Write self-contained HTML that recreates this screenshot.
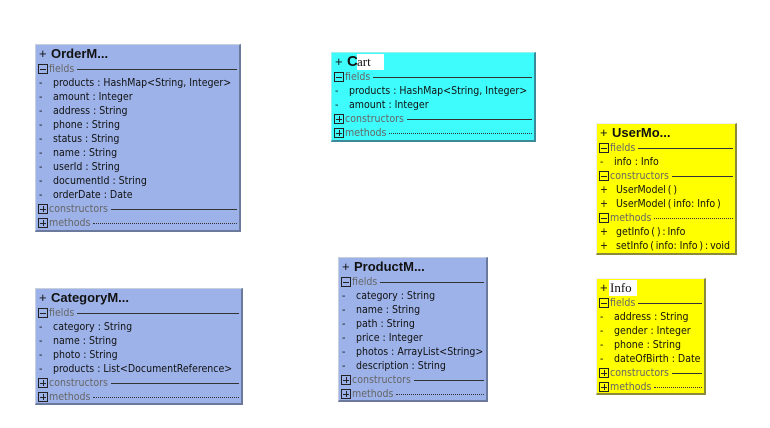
<!DOCTYPE html>
<html><head><meta charset="utf-8"><style>
html,body{margin:0;padding:0;background:#fff;width:770px;height:428px;overflow:hidden}
.b{position:absolute;box-sizing:border-box;border-top:1px solid #c8cfdc;border-left:1px solid #c8cfdc;border-right:2px solid #6b7a9c;border-bottom:2px solid #6b7a9c;font-family:"DejaVu Sans Condensed","DejaVu Sans","Liberation Sans",sans-serif;font-size:10.5px;color:#111}
.bl{background:#9db2e9}.cy{background:#3ffcfc;border-color:#9ee;border-right-color:#3a8a9a;border-bottom-color:#3a8a9a}.ye{background:#ffff00;border-color:#eee;border-right-color:#8a8a3a;border-bottom-color:#8a8a3a}
.h{height:17px;line-height:17px;position:relative;white-space:nowrap}
.h .p{position:absolute;left:3px;font-size:13px;font-family:"Liberation Sans",sans-serif}
.h .n{position:absolute;left:15px;font-weight:bold;font-size:13px;font-family:"Liberation Sans",sans-serif}
.r{height:14px;line-height:14px;position:relative;white-space:nowrap}
.r .d{position:absolute;left:3px}
.r .t{position:absolute;left:17px}
.r .m{position:absolute;left:19px}
.s{height:14px;position:relative;white-space:nowrap;display:flex;align-items:center;color:#666}
.s .i{width:8px;height:8px;border:1px solid #222;margin-left:2px;position:relative;flex:none}
.s .i:before{content:"";position:absolute;left:1px;right:1px;top:3.5px;height:1px;background:#222}
.s .i.pl:after{content:"";position:absolute;top:1px;bottom:1px;left:3.5px;width:1px;background:#222}
.s .l{margin-left:1px;margin-right:3px}
.s .ln{flex:1;height:0;border-top:1px solid #333;margin-right:2px}
.s .dt{flex:1;height:0;border-top:1px dotted #333;margin-right:2px}
.wb{position:absolute;background:#fff;font-family:"Liberation Serif",serif;font-weight:normal;font-size:13px;line-height:16px;top:1px}
</style></head><body>

<div class="b bl" style="left:35px;top:44px;width:206px;height:188px">
<div class="h"><span class="p">+</span><span class="n">OrderM...</span></div>
<div class="s"><span class="i"></span><span class="l">fields</span><span class="ln"></span></div>
<div class="r"><span class="d">-</span><span class="t">products : HashMap&lt;String, Integer&gt;</span></div>
<div class="r"><span class="d">-</span><span class="t">amount : Integer</span></div>
<div class="r"><span class="d">-</span><span class="t">address : String</span></div>
<div class="r"><span class="d">-</span><span class="t">phone : String</span></div>
<div class="r"><span class="d">-</span><span class="t">status : String</span></div>
<div class="r"><span class="d">-</span><span class="t">name : String</span></div>
<div class="r"><span class="d">-</span><span class="t">userId : String</span></div>
<div class="r"><span class="d">-</span><span class="t">documentId : String</span></div>
<div class="r"><span class="d">-</span><span class="t">orderDate : Date</span></div>
<div class="s"><span class="i pl"></span><span class="l">constructors</span><span class="ln"></span></div>
<div class="s"><span class="i pl"></span><span class="l">methods</span><span class="dt"></span></div>
</div>

<div class="b cy" style="left:331px;top:52px;width:205px;height:90px">
<div class="h"><span class="p">+</span><span class="n" style="font-size:15px">C</span><span class="wb" style="left:25px;width:27px;padding-left:0">art</span></div>
<div class="s"><span class="i"></span><span class="l">fields</span><span class="ln"></span></div>
<div class="r"><span class="d">-</span><span class="t">products : HashMap&lt;String, Integer&gt;</span></div>
<div class="r"><span class="d">-</span><span class="t">amount : Integer</span></div>
<div class="s"><span class="i pl"></span><span class="l">constructors</span><span class="ln"></span></div>
<div class="s"><span class="i pl"></span><span class="l">methods</span><span class="dt"></span></div>
</div>

<div class="b ye" style="left:596px;top:123px;width:141px;height:132px">
<div class="h"><span class="p">+</span><span class="n">UserMo...</span></div>
<div class="s"><span class="i"></span><span class="l">fields</span><span class="ln"></span></div>
<div class="r"><span class="d">-</span><span class="t">info : Info</span></div>
<div class="s"><span class="i"></span><span class="l">constructors</span><span class="ln"></span></div>
<div class="r"><span class="d">+</span><span class="m">UserModel&thinsp;(&thinsp;)</span></div>
<div class="r"><span class="d">+</span><span class="m">UserModel&thinsp;(&thinsp;info: Info&thinsp;)</span></div>
<div class="s"><span class="i"></span><span class="l">methods</span><span class="dt"></span></div>
<div class="r"><span class="d">+</span><span class="m">getInfo&thinsp;(&thinsp;)&thinsp;:&thinsp;Info</span></div>
<div class="r"><span class="d">+</span><span class="m">setInfo&thinsp;(&thinsp;info: Info&thinsp;)&thinsp;:&thinsp;void</span></div>
</div>

<div class="b ye" style="left:596px;top:278px;width:110px;height:117px">
<div class="h"><span class="p">+</span><span class="wb" style="left:12px;width:27px;padding-left:1px">Info</span></div>
<div class="s"><span class="i"></span><span class="l">fields</span><span class="ln"></span></div>
<div class="r"><span class="d">-</span><span class="t">address : String</span></div>
<div class="r"><span class="d">-</span><span class="t">gender : Integer</span></div>
<div class="r"><span class="d">-</span><span class="t">phone : String</span></div>
<div class="r"><span class="d">-</span><span class="t">dateOfBirth : Date</span></div>
<div class="s"><span class="i pl"></span><span class="l">constructors</span><span class="ln"></span></div>
<div class="s"><span class="i pl"></span><span class="l">methods</span><span class="dt"></span></div>
</div>

<div class="b bl" style="left:35px;top:288px;width:208px;height:117px">
<div class="h"><span class="p">+</span><span class="n">CategoryM...</span></div>
<div class="s"><span class="i"></span><span class="l">fields</span><span class="ln"></span></div>
<div class="r"><span class="d">-</span><span class="t">category : String</span></div>
<div class="r"><span class="d">-</span><span class="t">name : String</span></div>
<div class="r"><span class="d">-</span><span class="t">photo : String</span></div>
<div class="r"><span class="d">-</span><span class="t">products : List&lt;DocumentReference&gt;</span></div>
<div class="s"><span class="i pl"></span><span class="l">constructors</span><span class="ln"></span></div>
<div class="s"><span class="i pl"></span><span class="l">methods</span><span class="dt"></span></div>
</div>

<div class="b bl" style="left:338px;top:257px;width:150px;height:145px">
<div class="h"><span class="p">+</span><span class="n">ProductM...</span></div>
<div class="s"><span class="i"></span><span class="l">fields</span><span class="ln"></span></div>
<div class="r"><span class="d">-</span><span class="t">category : String</span></div>
<div class="r"><span class="d">-</span><span class="t">name : String</span></div>
<div class="r"><span class="d">-</span><span class="t">path : String</span></div>
<div class="r"><span class="d">-</span><span class="t">price : Integer</span></div>
<div class="r"><span class="d">-</span><span class="t">photos : ArrayList&lt;String&gt;</span></div>
<div class="r"><span class="d">-</span><span class="t">description : String</span></div>
<div class="s"><span class="i pl"></span><span class="l">constructors</span><span class="ln"></span></div>
<div class="s"><span class="i pl"></span><span class="l">methods</span><span class="dt"></span></div>
</div>

</body></html>
